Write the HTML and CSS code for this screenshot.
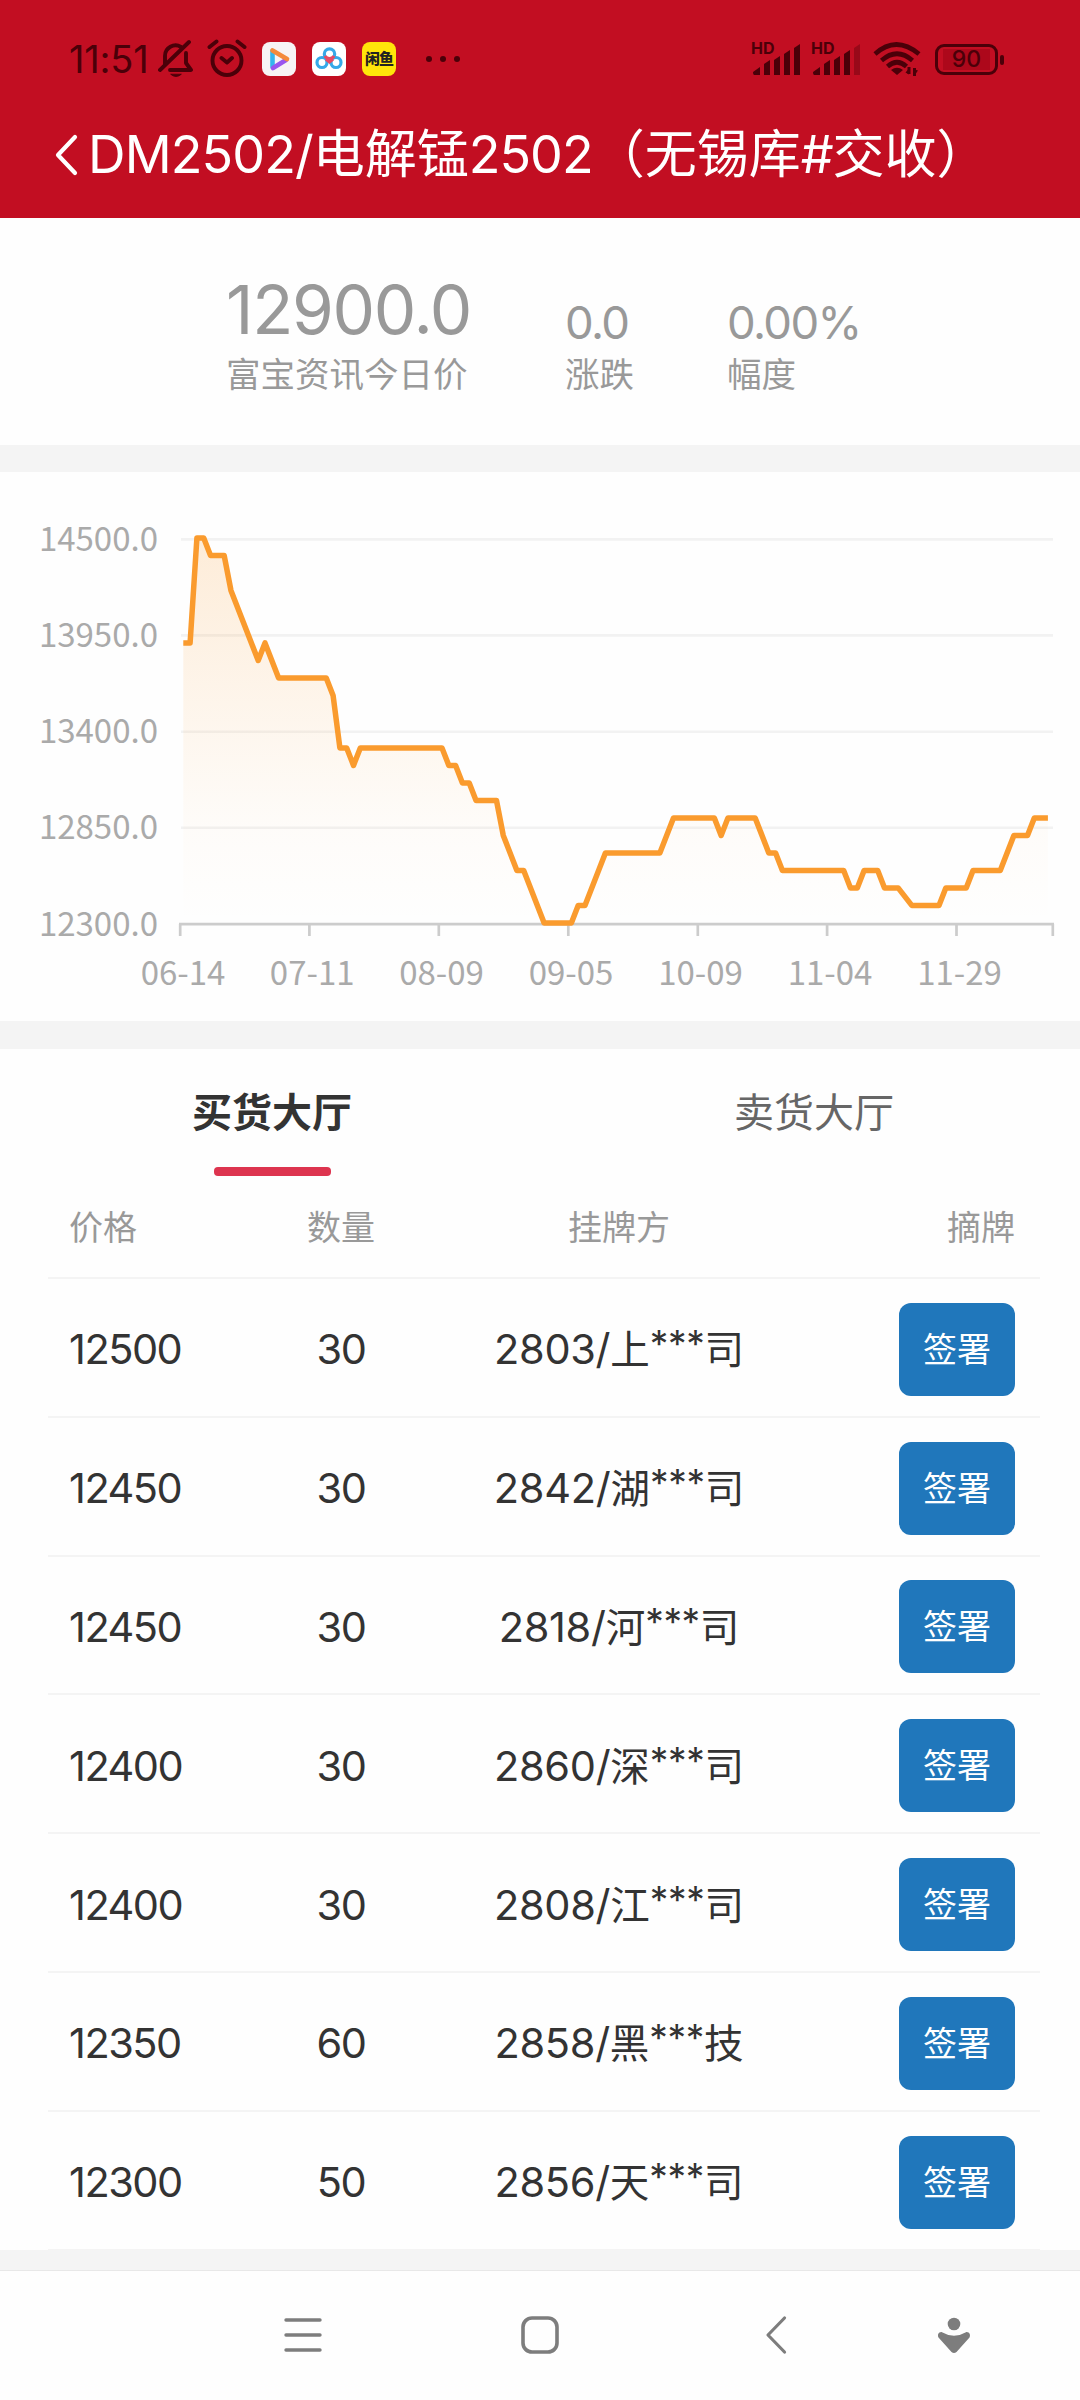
FILE: index.html
```html
<!DOCTYPE html>
<html lang="zh-CN">
<head>
<meta charset="utf-8">
<title>DM2502/电解锰2502</title>
<link rel="stylesheet" href="styles.css">
</head>
<body>
<header class="top">
  <div class="status">
    <div class="status-left">
      <span class="clock">11:51</span>
      <svg class="bell" width="36" height="40" viewBox="0 0 36 40" fill="none" stroke="currentColor" stroke-width="3.900" stroke-linecap="round" stroke-linejoin="round"><path d="M7 25V17a10.500 10.500 0 0 1 16-9M28 14v10l5 7H12M2 31L31 3"/><path d="M13 35.500q5 4 10 0z" fill="currentColor" stroke-width="1"/></svg>
      <svg class="alarm" width="40" height="40" viewBox="0 0 40 40" fill="none" stroke="currentColor" stroke-width="3.900" stroke-linecap="round" stroke-linejoin="round"><circle cx="20" cy="21.500" r="14.500"/><path d="M14.500 19l5.500 4.500 5-4.500M2.500 8l7-5.500M30.500 2.500l7 5.500"/></svg>
      <svg class="app" width="34" height="34" viewBox="0 0 34 34"><rect width="34" height="34" rx="8" fill="#f7f3f5"/><path d="M10.500 25V9" stroke="#35b5ee" stroke-width="4.600" stroke-linecap="round"/><path d="M11 26L24 18" stroke="#9a55ee" stroke-width="4.600" stroke-linecap="round"/><path d="M10.500 8.500L25 17" stroke="#f48a3c" stroke-width="4.600" stroke-linecap="round"/></svg>
      <svg class="app" width="34" height="34" viewBox="0 0 34 34" fill="none" stroke-width="3.200"><rect width="34" height="34" rx="8" fill="#fff"/><circle cx="10" cy="20.500" r="5" stroke="#36a9e8"/><circle cx="24" cy="20.500" r="5" stroke="#36a9e8"/><circle cx="17.500" cy="12" r="5.200" stroke="#36a9e8"/><path d="M13 14a5.200 5.200 0 0 0 9 0M14 17l3.500 3 3.500-3" stroke="#e84a62"/></svg>
      <span class="app fish">闲鱼</span>
      <svg class="dots" width="36" height="8" viewBox="0 0 36 8" fill="currentColor"><circle cx="4" cy="4" r="3"/><circle cx="18" cy="4" r="3"/><circle cx="32" cy="4" r="3"/></svg>
    </div>
    <div class="status-right">
      <div class="signal"><span class="hd">HD</span>
        <svg width="50" height="34" viewBox="0 0 50 34" fill="currentColor"><path d="M2 30l7-5v8H3q-1 0-1-3zM13 22l6-4v15h-6zM23 18l6-4v19h-6zM33 12l6-4v25h-6zM43 6l6-4v31h-6z"/></svg></div>
      <div class="signal"><span class="hd">HD</span>
        <svg width="50" height="34" viewBox="0 0 50 34" fill="currentColor"><path d="M2 30l7-5v8H3q-1 0-1-3zM13 22l6-4v15h-6zM23 18l6-4v19h-6zM33 12l6-4v25h-6z"/><path d="M43 6l6-4v31h-6z" opacity=".35"/></svg></div>
      <svg class="wifi" width="48" height="36" viewBox="0 0 48 36" fill="none" stroke="currentColor" stroke-width="4.600"><path d="M2 13q21-19 44 0M8.500 19.500q15.500-13.500 31 0M14.500 25.500q9.500-8.500 19 0"/><path d="M18 29q6-4.500 12 0l-6 5z" fill="currentColor" stroke="none"/><path d="M36 26v7M41.500 27v8" stroke-width="3"/><path d="M32.500 31.500l3.500-4v6zM45 29.500l-3.500 5v-6z" fill="currentColor" stroke="none"/></svg>
      <div class="battery"><span class="level">90</span></div>
    </div>
  </div>
  <div class="title-bar">
    <svg width="26" height="42" viewBox="0 0 26 42" fill="none" stroke="#fff" stroke-width="4.200" stroke-linecap="round" stroke-linejoin="round"><path d="M22 3L5 21l17 18"/></svg>
    <h1 class="title"><span class="code">DM2502/</span>电解锰<span class="num">2502</span>（无锡库<span class="num">#</span>交收）</h1>
  </div>
</header>

<section class="summary">
  <div class="stat main"><b class="value">12900.0</b><span class="label">富宝资讯今日价</span></div>
  <div class="stat change"><b class="value">0.0</b><span class="label">涨跌</span></div>
  <div class="stat"><b class="value">0.00%</b><span class="label">幅度</span></div>
</section>

<section class="chart">
  <svg width="1080" height="549" viewBox="0 472 1080 549">
    <defs>
      <linearGradient id="area" gradientUnits="userSpaceOnUse" x1="0" y1="0" x2="0" y2="2200">
        <stop offset="0" stop-color="#fa9b2e" stop-opacity="0"/>
        <stop offset=".25" stop-color="#fa9b2e" stop-opacity=".025"/>
        <stop offset="1" stop-color="#fa9b2e" stop-opacity=".18"/>
      </linearGradient>
    </defs>
    <path d="M181 539.400H1053M181 635.400H1053M181 731.800H1053M181 827.800H1053" stroke="#f2f2f2" stroke-width="2.600"/>
    <path d="M179 924.200H1054M180.200 924v12M309.400 924v12M438.800 924v12M568.300 924v12M697.800 924v12M827.100 924v12M956.500 924v12M1052.800 924v12" stroke="#ccc" stroke-width="2.700"/>
    <g transform="translate(183.300 922.900) scale(6.808 -.175)">
      <path fill="url(#area)" d="M0 0V1600L1 1600 2 2200 3 2200 4 2100 6 2100 7 1900 11 1500 12 1600 14 1400 21 1400 22 1300 23 1000 24 1000 25 900 26 1000 38 1000 39 900 40 900 41 800 42 800 43 700 46 700 47 500 49 300 50 300 53 0 57 0 58 100 59 100 62 400 70 400 72 600 78 600 79 500 80 600 84 600 86 400 87 400 88 300 97 300 98 200 99 200 100 300 102 300 103 200 105 200 107 100 111 100 112 200 115 200 116 300 120 300 122 500 124 500 125 600 127 600V0z"/>
      <polyline class="price-line" points="0,1600 1,1600 2,2200 3,2200 4,2100 6,2100 7,1900 11,1500 12,1600 14,1400 21,1400 22,1300 23,1000 24,1000 25,900 26,1000 38,1000 39,900 40,900 41,800 42,800 43,700 46,700 47,500 49,300 50,300 53,0 57,0 58,100 59,100 62,400 70,400 72,600 78,600 79,500 80,600 84,600 86,400 87,400 88,300 97,300 98,200 99,200 100,300 102,300 103,200 105,200 107,100 111,100 112,200 115,200 116,300 120,300 122,500 124,500 125,600 127,600"/>
    </g>
    <g class="axis" text-anchor="end">
      <text x="158" y="551">14500.0</text><text x="158" y="647">13950.0</text><text x="158" y="743">13400.0</text><text x="158" y="839">12850.0</text><text x="158" y="936">12300.0</text>
    </g>
    <g class="axis" text-anchor="middle">
      <text x="183" y="984.500">06-14</text><text x="312.200" y="984.500">07-11</text><text x="441.500" y="984.500">08-09</text><text x="571" y="984.500">09-05</text><text x="700.500" y="984.500">10-09</text><text x="830" y="984.500">11-04</text><text x="959.500" y="984.500">11-29</text>
    </g>
  </svg>
</section>

<nav class="tabs">
  <div class="tab active">买货大厅</div>
  <div class="tab">卖货大厅</div>
</nav>

<main class="list">
  <div class="row head"><span>价格</span><span class="mid">数量</span><span class="mid">挂牌方</span><span class="end">摘牌</span></div>
  <div class="row"><span>12500</span><span class="mid">30</span><span class="mid party">2803/<i>上</i><em>***</em><i>司</i></span><button class="sign">签署</button></div>
  <div class="row"><span>12450</span><span class="mid">30</span><span class="mid party">2842/<i>湖</i><em>***</em><i>司</i></span><button class="sign">签署</button></div>
  <div class="row"><span>12450</span><span class="mid">30</span><span class="mid party">2818/<i>河</i><em>***</em><i>司</i></span><button class="sign">签署</button></div>
  <div class="row"><span>12400</span><span class="mid">30</span><span class="mid party">2860/<i>深</i><em>***</em><i>司</i></span><button class="sign">签署</button></div>
  <div class="row"><span>12400</span><span class="mid">30</span><span class="mid party">2808/<i>江</i><em>***</em><i>司</i></span><button class="sign">签署</button></div>
  <div class="row"><span>12350</span><span class="mid">60</span><span class="mid party">2858/<i>黑</i><em>***</em><i>技</i></span><button class="sign">签署</button></div>
  <div class="row"><span>12300</span><span class="mid">50</span><span class="mid party">2856/<i>天</i><em>***</em><i>司</i></span><button class="sign">签署</button></div>
</main>

<footer class="sysnav">
  <svg class="recent" width="38" height="40" viewBox="0 0 38 40" stroke="#7d7d7d" stroke-width="3.400" stroke-linecap="round"><path d="M2 5h34M2 20h34M2 35h34"/></svg>
  <svg class="home" width="38" height="40" viewBox="0 0 38 40" fill="none" stroke="#7d7d7d" stroke-width="3.600"><rect x="2" y="3" width="34" height="34" rx="9"/></svg>
  <svg class="back" width="22" height="40" viewBox="0 0 22 40" fill="none" stroke="#7d7d7d" stroke-width="3.200" stroke-linecap="round" stroke-linejoin="round"><path d="M19.500 3L3 20l16.500 17"/></svg>
  <svg width="34" height="40" viewBox="0 0 34 40" fill="#7d7d7d"><circle cx="17" cy="9" r="6.300"/><path d="M5 17.200q6 3.500 12 3.500t12-3.500c3-.7 5 2.500 3.500 5.300L19.500 37q-2.500 2-5 0L1.500 22.500C0 19.700 2 16.500 5 17.200z"/></svg>
</footer>
</body>
</html>
```
FILE: styles.css
```css
* { box-sizing: border-box; }
body {
  margin: 0;
  width: 1080px;
  height: 2400px;
  overflow: hidden;
  display: flex;
  flex-direction: column;
  background: #fefefe;
  font-family: Inter, "Noto Sans CJK SC", sans-serif;
  color: #333;
}
svg { display: block; flex: none; }

.top { height: 218px; background: #c20e22; flex: none; }
.status {
  height: 118px;
  display: flex;
  justify-content: space-between;
  padding: 0 76px 0 69px;
  color: #4b0009;
}
.status-left, .status-right { display: flex; align-items: center; }
.clock { width: 89px; font-size: 38px; letter-spacing: -0.200px; white-space: nowrap; }
.alarm { margin: 0 15px 0 13px; }
.app { margin-right: 16px; }
.fish {
  width: 34px;
  height: 34px;
  border-radius: 8px;
  background: #ffe50a;
  color: #222;
  font-size: 15px;
  font-weight: 900;
  line-height: 34px;
  letter-spacing: -1px;
  text-align: center;
}
.dots { margin-left: 13px; }
.status-right { gap: 10px; }
.signal { position: relative; }
.hd {
  position: absolute;
  left: 0;
  top: 0;
  font-size: 16px;
  line-height: 12px;
  font-weight: 700;
}
.wifi { margin: 0 4px 0 2px; }
.battery {
  position: relative;
  width: 63px;
  height: 31px;
  border: 3px solid currentColor;
  border-radius: 9px;
  margin-right: 6px;
}
.battery::after {
  content: "";
  position: absolute;
  right: -9px;
  top: 8px;
  width: 4px;
  height: 10px;
  border-radius: 2px;
  background: currentColor;
}
.level {
  display: block;
  margin: 2px 5px;
  background: #ad081b;
  font-size: 23px;
  font-weight: 500;
  line-height: 21px;
  text-align: center;
}
.title-bar { display: flex; align-items: center; height: 74px; padding-left: 53px; }
.title {
  margin: 0 0 0 9px;
  color: #fff;
  font-size: 52px;
  line-height: 72px;
  font-weight: 400;
  white-space: nowrap;
}
.code { letter-spacing: -0.900px; }
.num { letter-spacing: -1px; }

.summary {
  height: 254px;
  flex: none;
  display: flex;
  padding: 55px 0 0 226px;
  border-bottom: 27px solid #f4f4f4;
  color: #999;
}
.stat { display: flex; flex-direction: column; }
.main { width: 339px; }
.change { width: 162px; }
.value {
  height: 81px;
  font-size: 45.500px;
  line-height: 99px;
  font-weight: 400;
  letter-spacing: -1.600px;
}
.main .value { font-size: 67.500px; line-height: 73px; letter-spacing: -1.300px; }
.label { font-size: 34.500px; line-height: 42px; }

.chart { height: 577px; flex: none; border-bottom: 28px solid #f4f4f4; }
.price-line {
  fill: none;
  stroke: #fa9b2e;
  stroke-width: 5.500px;
  stroke-linejoin: round;
  vector-effect: non-scaling-stroke;
}
.axis { font-family: "Noto Sans CJK SC", sans-serif; font-size: 33px; fill: #aaa; }

.tabs { display: flex; height: 127px; flex: none; padding-left: 1px; }
.tab {
  flex: none;
  width: 542px;
  display: flex;
  flex-direction: column;
  align-items: center;
  padding-top: 34px;
  font-size: 40px;
  line-height: 60px;
  color: #666;
}
.active { color: #333; font-weight: 700; }
.active::after {
  content: "";
  width: 117px;
  height: 9px;
  margin-top: 24px;
  border-radius: 4px;
  background: #dd344f;
}

.list {
  height: 1094px;
  flex: none;
  padding: 0 40px 0 48px;
  border-bottom: 20px solid #f4f4f4;
}
.row {
  display: grid;
  grid-template-columns: 187px 170px 386px 1fr;
  align-items: center;
  height: 138.800px;
  padding: 4px 25px 0 21px;
  border-bottom: 2px solid #f4f4f4;
  font-size: 41.500px;
  line-height: 50px;
  letter-spacing: -1.500px;
  white-space: nowrap;
}
.head {
  height: 103px;
  padding-top: 2px;
  font-size: 34px;
  letter-spacing: 0;
  color: #999;
}
.mid { text-align: center; }
.end { text-align: right; }
.party { letter-spacing: -0.300px; }
.row i { font-style: normal; font-size: 39.500px; line-height: 0; letter-spacing: 0; }
.row em {
  font-style: normal;
  font-size: 37px;
  line-height: 0;
  letter-spacing: -0.300px;
  vertical-align: 7px;
}
.sign {
  justify-self: end;
  width: 116px;
  height: 93px;
  padding: 0;
  border: 0;
  border-radius: 12px;
  background: #2077bb;
  color: #fff;
  font: 34px/50px "Noto Sans CJK SC", sans-serif;
  padding-bottom: 3px;
}

.sysnav { display: flex; padding: 44px 0 0 284px; border-top: 1px solid #e8e8e8; height: 130px; }
.home { margin-left: 199px; }
.back { margin: 0 150px 0 206px; }
```
